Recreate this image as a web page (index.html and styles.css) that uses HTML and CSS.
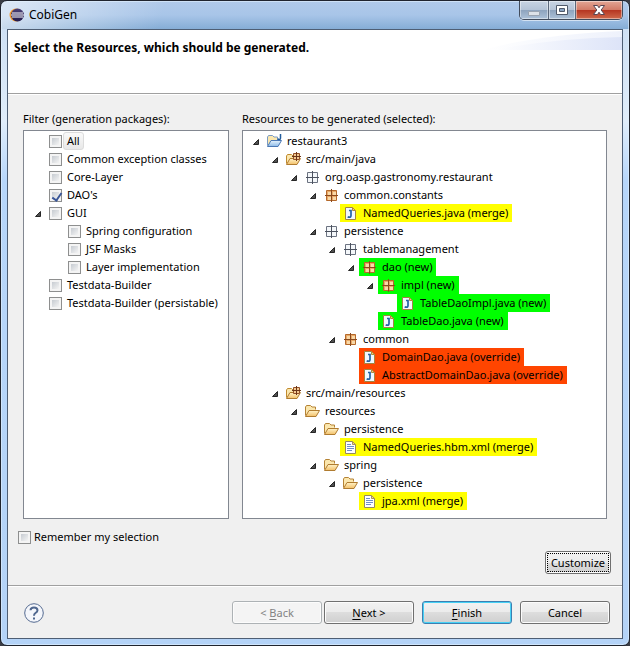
FILE: index.html
```html
<!DOCTYPE html>
<html lang="en">
<head>
<meta charset="utf-8">
<title>CobiGen</title>
<link rel="stylesheet" href="styles.css">
</head>
<body>
<svg class="defs" aria-hidden="true">
  <defs>
    <linearGradient id="gFolder" x1="0" y1="0" x2="0" y2="1"><stop offset="0" stop-color="#fff3c8"/><stop offset="1" stop-color="#f3c069"/></linearGradient>
    <linearGradient id="gBlue" x1="0" y1="0" x2="0" y2="1"><stop offset="0" stop-color="#e6f3fd"/><stop offset="1" stop-color="#8dbbe8"/></linearGradient>
    <linearGradient id="gEclipse" x1="0" y1="0" x2="0" y2="1"><stop offset="0" stop-color="#4a3f74"/><stop offset="1" stop-color="#231b4b"/></linearGradient>
    <linearGradient id="gSwoosh" x1="0" y1="0" x2="1" y2="0"><stop offset="0" stop-color="#fff"/><stop offset="1" stop-color="#dde4f8"/></linearGradient>
  </defs>
  <symbol id="twisty" viewBox="0 0 8 8"><path d="M6.5 1.5V6.500H1.500Z" fill="#505050" stroke="#262626"/></symbol>
  <symbol id="package" viewBox="0 0 16 16"><path d="M2.500 3.500h10v10h-10z" fill="#f4f7fa" stroke="#6b7280"/><path d="M7.500 2v13M1 8.500h13" stroke="#4b515e" fill="none"/></symbol>
  <symbol id="package-full" viewBox="0 0 16 16"><path d="M2.500 3.500h10v10h-10z" fill="#e9a968" stroke="#b5692b"/><path d="M4 5h3v3H4zM9 5h3v3H9zM4 10h3v3H4zM9 10h3v3H9z" fill="#f9d9a8"/><path d="M7.500 2v13M1 8.500h13" stroke="#8a4a1e" fill="none"/></symbol>
  <symbol id="folder" viewBox="0 0 16 16"><path d="M.5 12.500V4l1-1.500h4L7 4h3.500v2.500" fill="#fbe7ae" stroke="#b58335"/><path d="M.5 13.500L4 7.500h10.500L11 13.500z" fill="url(#gFolder)" stroke="#b07c30" stroke-linejoin="round"/></symbol>
  <symbol id="source" viewBox="0 0 16 16"><path d="M.5 12.500V5l1-1.500h4L7 5h3.500v2.500" fill="#fbe7ae" stroke="#c18b2f"/><path d="M.5 13.500L4 7.500h10.500L11 13.500z" fill="url(#gFolder)" stroke="#b07c30" stroke-linejoin="round"/><path d="M7.500 2.500h6v6h-6z" fill="#f4c991" stroke="#935026"/><path d="M10.500 1v9M6 5.500h9" stroke="#6b3518" fill="none"/></symbol>
  <symbol id="project" viewBox="0 0 16 16"><path d="M.5 12.500V4l1-1.500h4L7 4h3.500v3.500" fill="#fbe7ae" stroke="#7a9bc4"/><path d="M.5 13.500L4 7.500h10.500L11 13.500z" fill="url(#gBlue)" stroke="#4b78b5" stroke-linejoin="round"/><path d="M13.500 1v4.200q0 1.300-1.300 1.300-1 0-1.400-.8" fill="none" stroke="#225b9b" stroke-width="1.500"/></symbol>
  <symbol id="java" viewBox="0 0 16 16"><path d="M2.500 2.500h7l3 3v9h-10z" fill="#f1f8ff" stroke="#a28443"/><path d="M9.500 2.500v3h3z" fill="#f1cd7d" stroke="#b28a3d"/><path d="M6 5.500h2V10.500q0 1.700-1.700 1.700-.8 0-1.600-.5" fill="none" stroke="#2463a4" stroke-width="1.700"/></symbol>
  <symbol id="file" viewBox="0 0 16 16"><path d="M2.500 2.500h7l3 3v9h-10z" fill="#fff" stroke="#948961"/><path d="M9.500 2.500v3h3z" fill="#efd79d" stroke="#a99359"/><path d="M4 5.500h4M4 7.500h7M4 9.500h7M4 11.500h5" stroke="#6d8fca" fill="none"/></symbol>
</svg>

<main class="window">
  <header class="titlebar">
    <svg class="logo" viewBox="0 0 16 16" aria-hidden="true"><circle cx="7" cy="8" r="6.500" fill="#f49a2e"/><circle cx="8.500" cy="8" r="6.500" fill="url(#gEclipse)"/><path d="M3 6h11M2 8h13M3 10h11" stroke="#fff"/></svg>
    <h1>CobiGen</h1>
    <div class="caption">
      <button class="cap" aria-label="Minimize"><svg viewBox="0 0 14 14"><path d="M1.500 8.500h11v4h-11z" fill="#dde2e8" stroke="#9aa4b1"/></svg></button>
      <button class="cap" aria-label="Maximize"><svg viewBox="0 0 14 14"><path d="M1.500 2.500h11v9h-11z" fill="#fff" stroke="#505a6b"/><path d="M4.500 5.500h5v3h-5z" fill="#8ba5c4" stroke="#505a6b"/></svg></button>
      <button class="cap close" aria-label="Close"><svg viewBox="0 0 14 14"><path d="M1.500 2.500h4L7 4.800l1.500-2.300h4L9.200 7l3.300 4.500h-4L7 9.200l-1.500 2.300h-4L4.800 7z" fill="#fff" stroke="#5a4652"/></svg></button>
    </div>
  </header>

  <form class="dialog" onsubmit="return false">
    <div class="banner">
      <h2>Select the Resources, which should be generated.</h2>
      <svg class="swoosh" viewBox="0 0 140 20" preserveAspectRatio="none" aria-hidden="true"><path d="M0 20Q60 4 140 1V20Z" fill="url(#gSwoosh)" opacity=".5"/><path d="M10 20Q75 8 140 7V20Z" fill="url(#gSwoosh)"/></svg>
    </div>

    <div class="content">
      <div class="panels">
        <section class="panel">
          <h3>Filter (generation packages):</h3>
          <ul class="tree filter">
            <li><div class="row"><input type="checkbox" id="f1"><label class="item focus" for="f1">All</label></div></li>
            <li><div class="row"><input type="checkbox" id="f2"><label class="item" for="f2">Common exception classes</label></div></li>
            <li><div class="row"><input type="checkbox" id="f3"><label class="item" for="f3">Core-Layer</label></div></li>
            <li><div class="row"><input type="checkbox" id="f4" checked><label class="item" for="f4">DAO's</label></div></li>
            <li><div class="row"><button class="twisty" aria-label="Collapse"><svg><use href="#twisty"/></svg></button><input type="checkbox" id="f5"><label class="item" for="f5">GUI</label></div>
              <ul>
                <li><div class="row"><input type="checkbox" id="f6"><label class="item" for="f6">Spring configuration</label></div></li>
                <li><div class="row"><input type="checkbox" id="f7"><label class="item" for="f7">JSF Masks</label></div></li>
                <li><div class="row"><input type="checkbox" id="f8"><label class="item" for="f8">Layer implementation</label></div></li>
              </ul>
            </li>
            <li><div class="row"><input type="checkbox" id="f9"><label class="item" for="f9">Testdata-Builder</label></div></li>
            <li><div class="row"><input type="checkbox" id="f10"><label class="item" for="f10">Testdata-Builder (persistable)</label></div></li>
          </ul>
        </section>

        <section class="panel">
          <h3>Resources to be generated (selected):</h3>
          <ul class="tree">
            <li><div class="row"><button class="twisty" aria-label="Collapse"><svg><use href="#twisty"/></svg></button><span class="node"><svg><use href="#project"/></svg>restaurant3</span></div>
              <ul>
                <li><div class="row"><button class="twisty" aria-label="Collapse"><svg><use href="#twisty"/></svg></button><span class="node"><svg><use href="#source"/></svg>src/main/java</span></div>
                  <ul>
                    <li><div class="row"><button class="twisty" aria-label="Collapse"><svg><use href="#twisty"/></svg></button><span class="node"><svg><use href="#package"/></svg>org.oasp.gastronomy.restaurant</span></div>
                      <ul>
                        <li><div class="row"><button class="twisty" aria-label="Collapse"><svg><use href="#twisty"/></svg></button><span class="node"><svg><use href="#package-full"/></svg>common.constants</span></div>
                          <ul>
                            <li><div class="row"><span class="node merge"><svg><use href="#java"/></svg>NamedQueries.java (merge)</span></div></li>
                          </ul>
                        </li>
                        <li><div class="row"><button class="twisty" aria-label="Collapse"><svg><use href="#twisty"/></svg></button><span class="node"><svg><use href="#package"/></svg>persistence</span></div>
                          <ul>
                            <li><div class="row"><button class="twisty" aria-label="Collapse"><svg><use href="#twisty"/></svg></button><span class="node"><svg><use href="#package"/></svg>tablemanagement</span></div>
                              <ul>
                                <li><div class="row"><button class="twisty" aria-label="Collapse"><svg><use href="#twisty"/></svg></button><span class="node new"><svg><use href="#package-full"/></svg>dao (new)</span></div>
                                  <ul>
                                    <li><div class="row"><button class="twisty" aria-label="Collapse"><svg><use href="#twisty"/></svg></button><span class="node new"><svg><use href="#package-full"/></svg>impl (new)</span></div>
                                      <ul>
                                        <li><div class="row"><span class="node new"><svg><use href="#java"/></svg>TableDaoImpl.java (new)</span></div></li>
                                      </ul>
                                    </li>
                                    <li><div class="row"><span class="node new"><svg><use href="#java"/></svg>TableDao.java (new)</span></div></li>
                                  </ul>
                                </li>
                              </ul>
                            </li>
                            <li><div class="row"><button class="twisty" aria-label="Collapse"><svg><use href="#twisty"/></svg></button><span class="node"><svg><use href="#package-full"/></svg>common</span></div>
                              <ul>
                                <li><div class="row"><span class="node override"><svg><use href="#java"/></svg>DomainDao.java (override)</span></div></li>
                                <li><div class="row"><span class="node override"><svg><use href="#java"/></svg>AbstractDomainDao.java (override)</span></div></li>
                              </ul>
                            </li>
                          </ul>
                        </li>
                      </ul>
                    </li>
                  </ul>
                </li>
                <li><div class="row"><button class="twisty" aria-label="Collapse"><svg><use href="#twisty"/></svg></button><span class="node"><svg><use href="#source"/></svg>src/main/resources</span></div>
                  <ul>
                    <li><div class="row"><button class="twisty" aria-label="Collapse"><svg><use href="#twisty"/></svg></button><span class="node"><svg><use href="#folder"/></svg>resources</span></div>
                      <ul>
                        <li><div class="row"><button class="twisty" aria-label="Collapse"><svg><use href="#twisty"/></svg></button><span class="node"><svg><use href="#folder"/></svg>persistence</span></div>
                          <ul>
                            <li><div class="row"><span class="node merge"><svg><use href="#file"/></svg>NamedQueries.hbm.xml (merge)</span></div></li>
                          </ul>
                        </li>
                        <li><div class="row"><button class="twisty" aria-label="Collapse"><svg><use href="#twisty"/></svg></button><span class="node"><svg><use href="#folder"/></svg>spring</span></div>
                          <ul>
                            <li><div class="row"><button class="twisty" aria-label="Collapse"><svg><use href="#twisty"/></svg></button><span class="node"><svg><use href="#folder"/></svg>persistence</span></div>
                              <ul>
                                <li><div class="row"><span class="node merge"><svg><use href="#file"/></svg>jpa.xml (merge)</span></div></li>
                              </ul>
                            </li>
                          </ul>
                        </li>
                      </ul>
                    </li>
                  </ul>
                </li>
              </ul>
            </li>
          </ul>
        </section>
      </div>
      <div class="remember"><input type="checkbox" id="remember"><label for="remember">Remember my selection</label></div>
      <div class="customize"><button class="btn focused"><span>Customize</span></button></div>
    </div>

    <footer class="footer">
      <button class="help" aria-label="Help"><svg viewBox="0 0 20 20"><circle cx="10" cy="10" r="9.300" fill="#f4f6fb" stroke="#556b91"/><path d="M6.500 7.200Q6.700 4.500 10 4.500T13.500 7.300Q13.500 8.800 11.500 10 10 11 10 12.800" fill="none" stroke="#4f678f" stroke-width="2"/><path d="M9 14.500h2v2H9z" fill="#4f678f"/></svg></button>
      <div class="pair">
        <button class="btn" disabled>&lt; <u>B</u>ack</button>
        <button class="btn"><u>N</u>ext &gt;</button>
      </div>
      <button class="btn default"><u>F</u>inish</button>
      <button class="btn">Cancel</button>
    </footer>
  </form>
</main>
</body>
</html>
```

FILE: styles.css
```css
* { box-sizing: border-box; }
html, body { height: 100%; margin: 0; }
body {
  background: #3a3c44;
  color: #000;
  font: 11px/18px "Noto Sans", "Open Sans", sans-serif;
}
h1, h2, h3, ul { margin: 0; padding: 0; font: inherit; }
ul { list-style: none; }
button { margin: 0; padding: 0; border: 0; background: none; color: inherit; font: inherit; }
svg { display: block; flex: none; }
.defs { position: absolute; width: 0; height: 0; }

.window {
  display: flex;
  flex-direction: column;
  min-height: 100%;
  padding: 0 6px 6px;
  border: 1px solid #20242e;
  border-radius: 7px;
  background:
    linear-gradient(105deg, #ffffff90 0, #ffffff50 70px, #ffffff00 160px) top / 100% 28px no-repeat,
    linear-gradient(#b1caea, #a8c5e8 50%, #85add6) top / 100% 28px no-repeat,
    linear-gradient(#c9dcf2, #e0edfa 120px, #b7d6fa 180px, #b4d3f7);
  box-shadow: inset 0 0 0 1px #e5f2ff90;
}

.titlebar { display: flex; align-items: flex-start; height: 28px; padding-left: 2px; }
.logo { width: 16px; height: 16px; margin-top: 6px; }
.titlebar h1 { flex: 1; padding: 5px 4px 0; font-size: 12px; }
.caption {
  display: grid;
  grid-template-columns: 28px 27px 47px;
  height: 19px;
  overflow: hidden;
  border: solid #424c5c;
  border-width: 0 1px 1px;
  border-radius: 0 0 5px 5px;
  box-shadow: 0 1px #ffffff90;
}
.cap {
  display: grid;
  place-items: center;
  background: linear-gradient(#c8d4e3, #b4c3d6 50%, #8da3bd 50%, #adc2d9);
  box-shadow: inset 0 0 0 1px #ffffff70;
}
.cap + .cap { border-left: 1px solid #5b687b; }
.cap svg { width: 14px; height: 14px; }
.close { background: linear-gradient(#e3a695, #d27a66 50%, #b53420 50%, #cf6a4c); }

.dialog {
  display: flex;
  flex: 1;
  flex-direction: column;
  border: 1px solid #4e5e74;
  background: #f0f0f0;
}
.banner {
  display: flex;
  justify-content: space-between;
  height: 64px;
  border-bottom: 1px solid #a0a0a0;
  background: #fff;
}
.banner h2 { padding: 9px 6px; font-size: 12px; font-weight: 700; white-space: nowrap; }
.swoosh { width: 140px; height: 20px; }

.content { display: flex; flex: 1; flex-direction: column; padding: 15px 11px 11px 10px; border-top: 1px solid #fff; }
.panels { display: grid; flex: 1; grid-template-columns: minmax(0, 206fr) minmax(0, 365fr); gap: 13px; padding: 0 4px 0 5px; }
.panel { display: flex; flex-direction: column; }
.panel h3 { padding-bottom: 2px; white-space: nowrap; }
.tree { flex: 1; padding: 1px 0 1px 7px; border: 1px solid #828790; background: #fff; }
.tree ul { padding-left: 19px; }
.row { display: flex; align-items: center; height: 18px; padding-left: 14px; white-space: nowrap; }
.twisty { display: grid; align-items: center; width: 14px; height: 18px; margin-left: -14px; padding: 2px 0 0 2px; }
.twisty svg { width: 8px; height: 8px; }
.node { display: flex; gap: 4px; align-items: center; height: 18px; padding: 0 4px 0 3px; }
.node svg { width: 16px; height: 16px; }
.merge { background: #ff0; }
.new { background: #0f0; }
.override { background: #ff4500; }

.filter { padding-left: 10px; }
.filter .row { padding-left: 15px; }
.filter .twisty { width: 15px; margin-left: -15px; padding-left: 0; }
.item { height: 18px; margin-left: 1px; padding: 0 3px; border: 1px solid transparent; border-radius: 3px; line-height: 16px; }
.focus { border-color: #dcdcdc; background: linear-gradient(#fafafa, #e8e8e8); }

input[type="checkbox"] {
  flex: none;
  width: 13px;
  height: 13px;
  margin: 0;
  appearance: none;
  border: 1px solid #8e8f8f;
  background: linear-gradient(135deg, #c6cbd1, #f4f4f4) content-box, #f4f4f4;
  padding: 2px;
}
input[type="checkbox"]:checked::before {
  display: block;
  width: 4px;
  height: 8px;
  margin: -1px 0 0 2px;
  border: solid #3b5798;
  border-width: 0 2px 2px 0;
  content: "";
  transform: rotate(35deg);
}

.remember { display: flex; gap: 3px; align-items: center; padding-top: 9px; }
.customize { display: flex; justify-content: flex-end; padding-top: 5px; }
.btn {
  width: 90px;
  height: 23px;
  border: 1px solid #707070;
  border-radius: 3px;
  background: linear-gradient(#f2f2f2, #ebebeb 50%, #ddd 50%, #cfcfcf);
  box-shadow: inset 0 0 0 1px #fcfcfc;
  line-height: 21px;
}
.btn:disabled { border-color: #adb2b5; background: #f4f4f4; color: #838383; }
.btn u { text-underline-offset: 2px; }
.default { border-color: #3c7fb1; box-shadow: inset 0 0 0 1px #46d1f5; }
.focused { width: 66px; padding: 1px; }
.focused span { display: block; height: 19px; border: 1px dotted #000; line-height: 17px; }

.footer {
  display: flex;
  gap: 8px;
  align-items: center;
  padding: 15px 12px 14px 16px;
  border-top: 1px solid #a0a0a0;
  box-shadow: inset 0 1px #fff;
}
.pair { display: flex; gap: 2px; }
.help { width: 20px; height: 20px; margin-right: auto; }
.help svg { width: 20px; height: 20px; }
```
